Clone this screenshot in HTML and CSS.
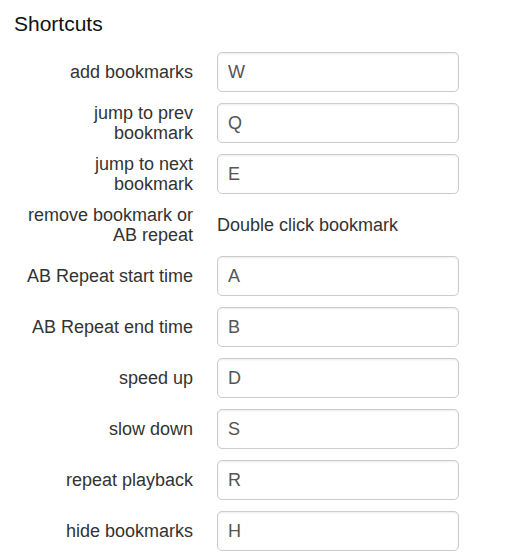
FILE: index.html
```html
<!DOCTYPE html>
<html>
<head>
<meta charset="utf-8">
<link rel="stylesheet" href="styles.css">
</head>
<body>
<div class="page">
  <h3 class="title">Shortcuts</h3>
  <form class="shortcuts">
    <label class="label">add bookmarks</label>
    <input class="field" type="text" value="W">
    <label class="label">jump to prev<br>bookmark</label>
    <input class="field" type="text" value="Q">
    <label class="label">jump to next<br>bookmark</label>
    <input class="field" type="text" value="E">
    <label class="label">remove bookmark or<br>AB repeat</label>
    <div class="static">Double click bookmark</div>
    <label class="label">AB Repeat start time</label>
    <input class="field" type="text" value="A">
    <label class="label">AB Repeat end time</label>
    <input class="field" type="text" value="B">
    <label class="label">speed up</label>
    <input class="field" type="text" value="D">
    <label class="label">slow down</label>
    <input class="field" type="text" value="S">
    <label class="label">repeat playback</label>
    <input class="field" type="text" value="R">
    <label class="label">hide bookmarks</label>
    <input class="field" type="text" value="H">
  </form>
</div>
</body>
</html>
```

FILE: styles.css
```css
html, body {
  margin: 0;
  padding: 0;
  background: #fff;
}
body {
  font-family: "Liberation Sans", Arial, sans-serif;
  color: #333;
}
.page {
  padding-top: 12px;
}
.title {
  margin: 0 0 17px 14px;
  font-size: 21px;
  font-weight: normal;
  line-height: 23px;
  color: #111;
}
.shortcuts {
  display: grid;
  grid-template-columns: 193px 242px;
  grid-auto-rows: 40px;
  column-gap: 24px;
  row-gap: 11px;
  margin: 0;
}
.label {
  font-size: 18px;
  line-height: 20px;
  text-align: right;
  align-self: center;
  color: #333;
}
.static {
  font-size: 18px;
  line-height: 20px;
  align-self: center;
  color: #333;
}
.field {
  box-sizing: border-box;
  width: 242px;
  height: 40px;
  margin: 0;
  padding: 0 10px;
  font-family: "Liberation Sans", Arial, sans-serif;
  font-size: 18px;
  color: #555;
  background: #fff;
  border: 1.5px solid #cbcbcb;
  border-radius: 5px;
  box-shadow: inset 0 1px 2px rgba(0,0,0,.08);
  outline: none;
}
```
